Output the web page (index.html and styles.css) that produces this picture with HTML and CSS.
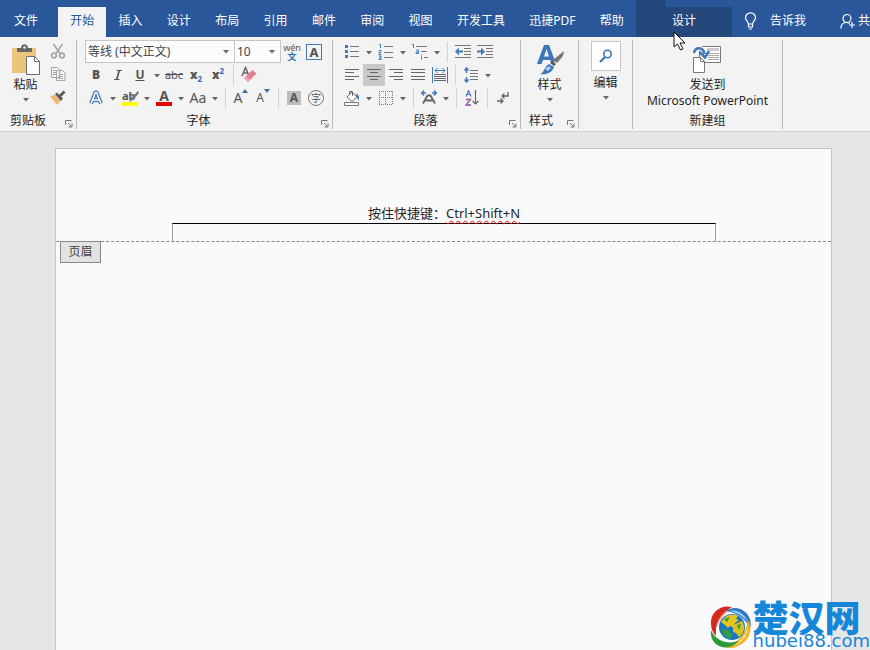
FILE: index.html
```html
<!DOCTYPE html>
<html lang="zh-CN">
<head>
<meta charset="utf-8">
<title>文档编辑器</title>
<link rel="stylesheet" href="styles.css">
</head>
<body>
<svg class="defs" aria-hidden="true">
  <symbol id="caret" viewBox="0 0 12 22"><path d="M3 10h6L6 13.500z" fill="#666"/></symbol>
  <symbol id="down" viewBox="0 0 8 5"><path d="M1 1h6L4 4.500z" fill="#666"/></symbol>
  <symbol id="launch" viewBox="0 0 9 9"><path d="M1.500 6V1.500h6M4 4l3.500 3.500M8 4.500V8H4.500" fill="none" stroke="#777"/></symbol>
</svg>

<header class="tabs">
  <button class="tab file">文件</button>
  <nav class="tablist">
    <button class="tab active">开始</button>
    <button class="tab">插入</button>
    <button class="tab">设计</button>
    <button class="tab">布局</button>
    <button class="tab">引用</button>
    <button class="tab">邮件</button>
    <button class="tab">审阅</button>
    <button class="tab">视图</button>
    <button class="tab">开发工具</button>
    <button class="tab">迅捷PDF</button>
    <button class="tab">帮助</button>
  </nav>
  <div class="context">
    <span class="context-title"></span>
    <button class="tab context-tab">设计</button>
  </div>
  <button class="tab tell">
    <svg width="13" height="18" viewBox="0 0 13 18" fill="none" stroke="#fff" stroke-width="1.200"><path d="M4.500 12C4.500 9.500 1.500 8.500 1.500 5.800a5 5 0 0 1 10 0C11.500 8.500 8.500 9.500 8.500 12zM4.500 12v3h4v-3M5 17h3"/></svg>
    告诉我
  </button>
  <button class="tab share">
    <svg width="16" height="17" viewBox="0 0 16 17" fill="none" stroke="#fff" stroke-width="1.200"><circle cx="7" cy="5.500" r="4"/><path d="M1 15.500c0-3.500 2-6 5.500-6 1.500 0 2.500.5 3.300 1M12 9v6M9 12h6"/></svg>
    共
  </button>
</header>

<section class="ribbon">
  <div class="group clipboard">
    <div class="body clip-body">
      <button class="big paste">
        <svg width="28" height="31" viewBox="0 0 28 31"><path d="M0 4h24v25H0z" fill="#edc47b"/><path d="M5 8V4h4c0-5 7-5 7 0h4v4z" fill="#666"/><circle cx="12.500" cy="3.500" r="1.300" fill="#eee"/><path d="M14.500 12.500h8l5 5v13h-13z" fill="#fff" stroke="#6c6c6c"/><path d="M22.500 12.500v5h5" fill="none" stroke="#6c6c6c"/></svg>
        <span>粘贴</span>
        <svg class="down"><use href="#down"/></svg>
      </button>
      <div class="stack">
        <button class="tool" aria-label="剪切"><svg width="16" height="16" viewBox="0 0 16 16" fill="none" stroke="#a6a6a6" stroke-width="1.700"><path d="M3.500 1l7 10M12.500 1l-7 10"/><circle cx="4" cy="12.500" r="2.300"/><circle cx="12" cy="12.500" r="2.300"/></svg></button>
        <button class="tool" aria-label="复制"><svg width="16" height="16" viewBox="0 0 16 16" fill="#f3f3f3" stroke="#a6a6a6"><path d="M1.500 1.500h6l2 2v8h-8zM6.500 4.500h6l2.500 2.500v7.500H6.500z"/><path d="M3 4.500h3M3 6.500h3M3 8.500h3M8.500 8.500H13M8.500 10.500H13M8.500 12.500H13"/></svg></button>
        <button class="tool" aria-label="格式刷"><svg width="16" height="16" viewBox="0 0 16 16"><path d="M0 7.500l5-2 6 6L7 16z" fill="#edb873"/><path d="M5 5l2-1.500 6 6L11 12z" fill="#5a5a5a"/><path d="M9 6l4.500-4.500 2 2L11 8z" fill="#5a5a5a"/></svg></button>
      </div>
    </div>
    <div class="foot"><span>剪贴板</span><button class="launch" aria-label="剪贴板选项"><svg><use href="#launch"/></svg></button></div>
  </div>

  <div class="group font">
    <div class="body rows">
      <div class="row">
        <label class="combo family"><select aria-label="字体"><option>等线 (中文正文)</option></select><svg class="down"><use href="#down"/></svg></label>
        <label class="combo size"><select aria-label="字号"><option>10</option></select><svg class="down"><use href="#down"/></svg></label>
        <button class="tool pinyin" aria-label="拼音指南"><span>wén</span><span class="han">文</span></button>
        <button class="tool"><span class="boxed">A</span></button>
      </div>
      <div class="row">
        <button class="tool glyph"><b>B</b></button>
        <button class="tool glyph" aria-label="倾斜"><svg width="8" height="10" viewBox="0 0 8 10" fill="none" stroke="#555"><path d="M2.500.5H8M0 9.500h5.500" /><path d="M5.200.5L2.800 9.500" stroke-width="1.700"/></svg></button>
        <button class="tool glyph"><u>U</u></button>
        <button class="caret" aria-label="下划线样式"><svg><use href="#caret"/></svg></button>
        <button class="tool strike"><s>abc</s></button>
        <button class="tool glyph"><b>x</b><span class="sub">2</span></button>
        <button class="tool glyph"><b>x</b><span class="sup">2</span></button>
        <span class="sep"></span>
        <button class="tool" aria-label="清除格式"><svg width="18" height="18" viewBox="0 0 18 18"><path d="M2 10L5.500 1.500 9 10M3.500 7H8" fill="none" stroke="#666" stroke-width="1.500"/><path d="M4 12l8.500-8 4 3.500-8.500 8.500z" fill="#e5808f"/><path d="M4 12l2-2 4 4-2 2z" fill="#f1a8b2"/></svg></button>
      </div>
      <div class="row">
        <button class="tool" aria-label="文本效果"><svg width="16" height="16" viewBox="0 0 16 16" fill="none" stroke-linejoin="round"><path d="M3 13.500L7.500 2.500h1L13 13.500M5 10h6" stroke="#b5cfee" stroke-width="5"/><path d="M3 13.500L7.500 2.500h1L13 13.500M5 10h6" stroke="#3e6fa8" stroke-width="3.400"/><path d="M3 13.500L7.500 2.500h1L13 13.500M5 10h6" stroke="#fff" stroke-width="1.500"/></svg></button>
        <button class="caret" aria-label="文本效果选项"><svg><use href="#caret"/></svg></button>
        <button class="tool colored hl"><span>ab</span><svg class="pen" width="11" height="12" viewBox="0 0 11 12"><path d="M10 0L3 7 1 11l4-2 6-7z" fill="#777"/></svg></button>
        <button class="caret" aria-label="突出显示颜色"><svg><use href="#caret"/></svg></button>
        <button class="tool colored fc"><span>A</span></button>
        <button class="caret" aria-label="字体颜色"><svg><use href="#caret"/></svg></button>
        <button class="tool latin">Aa</button>
        <button class="caret" aria-label="更改大小写"><svg><use href="#caret"/></svg></button>
        <span class="sep"></span>
        <button class="tool latin">A<svg class="mark" width="6" height="4" viewBox="0 0 6 4"><path d="M0 4h6L3 0z" fill="#44709f"/></svg></button>
        <button class="tool latin small">A<svg class="mark" width="6" height="4" viewBox="0 0 6 4"><path d="M0 0h6L3 4z" fill="#44709f"/></svg></button>
        <span class="sep"></span>
        <button class="tool"><span class="shaded">A</span></button>
        <button class="tool"><span class="circled">字</span></button>
      </div>
    </div>
    <div class="foot"><span>字体</span><button class="launch" aria-label="字体选项"><svg><use href="#launch"/></svg></button></div>
  </div>

  <div class="group para">
    <div class="body rows">
      <div class="row">
        <button class="tool" aria-label="项目符号"><svg width="14" height="15" viewBox="0 0 14 15"><path d="M0 1h3v3H0zM0 6h3v3H0zM0 11h3v3H0z" fill="#4478b8"/><path d="M5 2.500h9M5 7.500h9M5 12.500h9" stroke="#777"/></svg></button>
        <button class="caret" aria-label="项目符号选项"><svg><use href="#caret"/></svg></button>
        <button class="tool" aria-label="编号"><svg width="16" height="16" viewBox="0 0 16 16"><path d="M1 .5h1.500V4M.5 6.500H3v2H1v2h2.500M.5 12H3v1.800H1.500 3v1.700H.5" fill="none" stroke="#4478b8"/><path d="M6 2.500h9M6 8.500h9M6 13.500h9" stroke="#777"/></svg></button>
        <button class="caret" aria-label="编号选项"><svg><use href="#caret"/></svg></button>
        <button class="tool" aria-label="多级列表"><svg width="18" height="16" viewBox="0 0 18 16"><path d="M1 .5h1.500V4M5 6h2.500v3.500H5V8h2M10.500 10.500v1M10.500 12.500v3" fill="none" stroke="#4478b8"/><path d="M5 2.500h11M10 7.500h6M13 13.500h4" stroke="#777"/></svg></button>
        <button class="caret" aria-label="多级列表选项"><svg><use href="#caret"/></svg></button>
        <span class="sep"></span>
        <button class="tool" aria-label="减少缩进"><svg width="16" height="13" viewBox="0 0 16 13"><path d="M0 .5h16M9 3.500h7M9 6.500h7M9 9.500h7M0 12.500h16" stroke="#777"/><path d="M0 6.500L4 2.500v3h4v2H4v3z" fill="#4478b8"/></svg></button>
        <button class="tool" aria-label="增加缩进"><svg width="16" height="13" viewBox="0 0 16 13"><path d="M0 .5h16M9 3.500h7M9 6.500h7M9 9.500h7M0 12.500h16" stroke="#777"/><path d="M8 6.500L4 2.500v3H0v2h4v3z" fill="#4478b8"/></svg></button>
      </div>
      <div class="row">
        <button class="tool" aria-label="左对齐"><svg width="14" height="12" viewBox="0 0 14 12" stroke="#666"><path d="M0 .5h14M0 3.500h9M0 7.500h14M0 10.500h9"/></svg></button>
        <button class="tool on" aria-label="居中"><svg width="14" height="12" viewBox="0 0 14 12" stroke="#666"><path d="M0 .5h14M3 3.500h8M0 7.500h14M3 10.500h8"/></svg></button>
        <button class="tool" aria-label="右对齐"><svg width="14" height="12" viewBox="0 0 14 12" stroke="#666"><path d="M0 .5h14M5 3.500h9M0 7.500h14M5 10.500h9"/></svg></button>
        <button class="tool" aria-label="两端对齐"><svg width="14" height="12" viewBox="0 0 14 12" stroke="#666"><path d="M0 .5h14M0 3.500h14M0 7.500h14M0 10.500h14"/></svg></button>
        <button class="tool" aria-label="分散对齐"><svg width="16" height="16" viewBox="0 0 16 16" fill="none"><path d="M.5 0v16M15.500 0v16M3 3.500h10M5.500 1L3 3.500 5.500 6M10.500 1L13 3.500 10.500 6" stroke="#4478b8"/><path d="M2 7.500h12M2 9.500h12M2 11.500h12M2 13.500h12" stroke="#666"/></svg></button>
        <span class="sep"></span>
        <button class="tool" aria-label="行距"><svg width="14" height="16" viewBox="0 0 14 16" fill="none"><path d="M2.500 1v5M.5 3.500l2-2.500 2 2.500M2.500 10v5M.5 12.500l2 2.500 2-2.500" stroke="#4478b8" stroke-width="1.500"/><path d="M6 3.500h8M6 6.500h8M6 9.500h8M6 12.500h8" stroke="#777"/></svg></button>
        <button class="caret" aria-label="行距选项"><svg><use href="#caret"/></svg></button>
      </div>
      <div class="row">
        <button class="tool" aria-label="底纹"><svg width="16" height="16" viewBox="0 0 16 16" fill="none"><path d="M3 7l5-5 5 5-5 4.500z" fill="#fff" stroke="#666"/><path d="M5.500 5V1.500h3V6" stroke="#666"/><path d="M12 3.500c3 1 3.500 3.500 2.500 7-1-2-1.500-3-2-4z" fill="#4478b8"/><path d="M.5 12.500h14v3H.5z" fill="#fff" stroke="#777"/></svg></button>
        <button class="caret" aria-label="底纹颜色"><svg><use href="#caret"/></svg></button>
        <button class="tool" aria-label="边框"><svg width="14" height="14" viewBox="0 0 14 14" fill="none" stroke="#777" stroke-dasharray="1 1"><path d="M0 .5h14M0 6.500h14M0 13.500h14M.5 0v14M6.500 0v14M13.500 0v14"/></svg></button>
        <button class="caret" aria-label="边框选项"><svg><use href="#caret"/></svg></button>
        <span class="sep"></span>
        <button class="tool" aria-label="中文版式"><svg width="16" height="15" viewBox="0 0 16 15" fill="none"><path d="M0 3h5M3 .5L.7 3 3 5.500M16 3h-5M13 .5L15.300 3 13 5.500" stroke="#4478b8" stroke-width="1.400"/><path d="M2 13.500l4.500-8h3l4.500 8M4.500 10.500h7" stroke="#666" stroke-width="1.800"/></svg></button>
        <button class="caret" aria-label="中文版式选项"><svg><use href="#caret"/></svg></button>
        <span class="sep"></span>
        <button class="tool" aria-label="排序"><svg width="14" height="16" viewBox="0 0 14 16" fill="none"><path d="M1 6.500L3.500.5 6 6.500M2 4.500h3" stroke="#4478b8" stroke-width="1.200"/><path d="M1 9.500h4.500L1 15h5" stroke="#9454a5" stroke-width="1.300"/><path d="M10.500 0v14M7.500 11l3 3 3-3" stroke="#666" stroke-width="1.200"/></svg></button>
        <span class="sep"></span>
        <button class="tool" aria-label="显示编辑标记"><svg width="12" height="14" viewBox="0 0 12 14" fill="none" stroke="#666" stroke-width="1.300"><path d="M11 1v4H5M7.500 2.500L5 5l2.500 2.500M0 10h6M3.500 7.500L6 10l-2.500 2.500"/></svg></button>
      </div>
    </div>
    <div class="foot"><span>段落</span><button class="launch" aria-label="段落选项"><svg><use href="#launch"/></svg></button></div>
  </div>

  <div class="group styles">
    <div class="body">
      <button class="big">
        <svg width="30" height="31" viewBox="0 0 30 31"><path d="M2 20L9 1h5l6 16-3 3-2-4H8l-1.500 4zM9 12.500h5L11.500 5z" fill="#3e76b9"/><path d="M29 7l-1 5-6 7-4-3z" fill="#777"/><path d="M17 17l4 3-2 2-4-3z" fill="#555"/><path d="M14 20l5 3c-2 6-8 8-14 7 4-1 4-7 9-10z" fill="#3e76b9"/><path d="M10 25l4-3 2 2-3 3z" fill="#b5d2ef"/></svg>
        <span>样式</span>
        <svg class="down"><use href="#down"/></svg>
      </button>
    </div>
    <div class="foot"><span>样式</span><button class="launch" aria-label="样式选项"><svg><use href="#launch"/></svg></button></div>
  </div>

  <div class="group edit">
    <div class="body">
      <button class="big">
        <span class="tile"><svg width="14" height="14" viewBox="0 0 14 14" fill="none" stroke="#3e76b9"><circle cx="8.500" cy="5" r="3.700" stroke-width="1.600"/><path d="M6 8l-5 5" stroke-width="2.200"/></svg></span>
        <span>编辑</span>
        <svg class="down"><use href="#down"/></svg>
      </button>
    </div>
  </div>

  <div class="group send">
    <div class="body">
      <button class="big">
        <svg width="30" height="31" viewBox="0 0 30 31" fill="none"><path d="M7.500 2.500h21v16h-21z" fill="#fff" stroke="#777"/><path d="M15 4h12v3H15z" fill="#ccc"/><path d="M16 9.500h11M16 11.500h11M16 13.500h11M16 15.500h11" stroke="#aaa"/><path d="M1.500 13.500h7l4 4v11h-11z" fill="#fff" stroke="#777"/><path d="M8.500 13.500v4h4" stroke="#777"/><path d="M2 9C3 3 11 2 13 10" stroke="#f3f3f3" stroke-width="5"/><path d="M2 9C3 3 11 2 12.500 10" stroke="#3e76b9" stroke-width="2.500"/><path d="M7.500 8l5.500 5.500L17 7" stroke="#3e76b9" stroke-width="2.500"/></svg>
        <span>发送到</span>
        <span>Microsoft PowerPoint</span>
      </button>
    </div>
    <div class="foot"><span>新建组</span></div>
  </div>
</section>

<main class="workspace">
  <article class="page">
    <div class="page-header">
      <p class="header-text">按住快捷键：<span class="typo">Ctrl+Shift+N</span></p>
      <div class="header-box"></div>
    </div>
    <div class="header-edge"><span class="tag">页眉</span></div>
  </article>
</main>

<aside class="watermark">
  <svg width="42" height="44" viewBox="0 0 42 44">
    <circle cx="21" cy="22" r="17" fill="#fff"/>
    <path d="M22 2C10-1 0 8 1 19c0 5 2 9 5 12-1-12 3-21 16-29z" fill="#d42a22"/>
    <path d="M20 5C10 8 6 17 7 29c-1-9 3-17 13-24z" fill="#f79a80"/>
    <path d="M16 6c9-7 21-1 24 8 1 4 1 7 0 10C36 14 28 8 16 6z" fill="#2b79c9"/>
    <path d="M20 6c8-2 15 4 18 11-5-6-10-9-18-11z" fill="#a7d0f2"/>
    <path d="M38 15c7 13-2 25-16 28-3 0-5 0-7-1 12-4 21-12 23-27z" fill="#f3b11a"/>
    <path d="M38 22c0 9-6 16-15 19 7-4 12-10 15-19z" fill="#fde29a"/>
    <path d="M1 25c4 10 15 15 28 11-6 6-14 8-20 5C3 38 0 32 1 25z" fill="#2b9a3a"/>
    <circle cx="22" cy="22" r="13" fill="#1676c2"/>
    <path d="M11 17c4-7 11-9 17-6l-2 3 3 1-4 3-1 5-4-2-2 2-3-3z" fill="#e3c61e"/>
    <path d="M23 20l9-4c4 6 2 12-3 16l-3-4-3-1z" fill="#d9c320"/>
    <path d="M11 24l7 1 4 4-1 5c-5-1-9-5-10-10zM14 14l6-2-3 5zM27 20l4-1-2 6z" fill="#339b40"/>
  </svg>
  <div class="brand"><span class="brand-name">楚汉网</span><span class="brand-url">hubei88.com</span></div>
</aside>
<svg class="pointer" width="13" height="20" viewBox="0 0 13 20"><path d="M1 1v15l3.500-3 3 6 2.500-1.200-3-5.800H12z" fill="#fff" stroke="#111"/></svg>
</body>
</html>
```
FILE: styles.css
```css
* { box-sizing: border-box; }
body {
  margin: 0;
  height: 100vh;
  display: flex;
  flex-direction: column;
  overflow: hidden;
  background: #e6e6e6;
  color: #262626;
  font: 12px/16px "Noto Sans", "Noto Sans CJK SC", sans-serif;
}
button {
  border: 0;
  padding: 0;
  background: none;
  color: inherit;
  font: inherit;
  white-space: nowrap;
}
svg { display: block; flex: none; }
.defs { position: absolute; width: 0; height: 0; }

/* Tab strip */
.tabs {
  flex: none;
  display: flex;
  height: 37px;
  background: #2a579a;
  color: #fff;
  overflow: hidden;
}
.tab {
  flex: none;
  margin-top: 7px;
  padding: 0 12px 2px;
}
.file { padding: 0 20px 2px 14px; }
.tablist { display: flex; flex: 0 0 578px; }
.tablist .tab { flex: 1 0 auto; }
.active { background: #f3f3f3; color: #2a579a; }
.context { flex: none; display: flex; flex-direction: column; width: 96px; }
.context-title { width: 30px; height: 7px; background: #24477c; }
.context-tab { flex: 1; margin: 0; background: #24477c; }
.tell, .share { display: flex; align-items: center; gap: 13px; }
.share { margin-left: auto; gap: 2px; padding: 0 0 2px; }

/* Ribbon */
.ribbon {
  flex: none;
  display: flex;
  height: 95px;
  padding: 3px 0 2px;
  background: #f3f3f3;
  border-bottom: 1px solid #d0d0d0;
}
.group {
  display: flex;
  flex-direction: column;
  border-right: 1px solid #b8b8b8;
}
.clipboard { width: 77px; }
.font { width: 256px; }
.para { width: 188px; }
.styles { width: 58px; }
.edit { width: 54px; }
.send { width: 150px; }
.body { flex: 1; display: flex; justify-content: center; }
.rows { flex-direction: column; justify-content: flex-start; padding: 0 0 0 8px; }
.row { display: flex; align-items: center; height: 23px; }
.foot { display: flex; align-items: center; height: 16px; padding: 0 3px 0 10px; }
.foot span { flex: 1; text-align: center; }
.font .foot { padding-left: 0; }
.clipboard .foot span, .styles .foot span { text-align: left; }
.styles .foot { padding-left: 8px; }
.send .foot { padding: 0 4px; }
.launch { width: 9px; height: 9px; margin-top: 5px; }
.launch svg { width: 9px; height: 9px; }
.clip-body { justify-content: flex-start; padding-left: 4px; }
.stack { display: flex; flex-direction: column; gap: 1px; }
.big {
  display: flex;
  flex-direction: column;
  align-items: center;
  justify-content: flex-start;
  padding-top: 4px;
}
.big > svg:first-child { margin-bottom: 2px; }
.paste { width: 43px; }
.down { width: 8px; height: 5px; margin-top: 4px; }
.edit .big { padding-top: 1px; }
.tile {
  display: grid;
  place-items: center;
  width: 30px;
  height: 30px;
  margin-bottom: 4px;
  border: 1px solid #c6c6c6;
  background: #fdfdfd;
}
.tool {
  position: relative;
  display: flex;
  align-items: center;
  justify-content: center;
  width: 22px;
  height: 22px;
  color: #555;
}
.on { background: #c8c8c8; }
.caret, .caret svg { width: 12px; height: 22px; }
.sep { width: 1px; height: 20px; margin: 0 4px; background: #d2d2d2; }

.combo {
  display: flex;
  align-items: center;
  height: 23px;
  padding: 0 4px 0 2px;
  border: 1px solid #c6c6c6;
  background: #fcfcfc;
}
.combo select {
  flex: 1;
  min-width: 0;
  appearance: none;
  border: 0;
  padding: 0;
  background: none;
  color: #444;
  font: inherit;
}
.combo .down { margin: 0; }
.family { width: 150px; }
.size { width: 47px; margin-left: -1px; }
.pinyin {
  flex-direction: column;
  font-size: 9px;
  line-height: 9px;
}
.han { color: #2f6cb0; font-weight: bold; }
.boxed {
  width: 16px;
  height: 16px;
  border: 1px solid #4478b8;
  font: bold 13px/14px "Noto Sans", sans-serif;
}
.glyph { font-weight: bold; }
.strike { font-size: 11px; }
.sub, .sup { font-size: 8px; line-height: 8px; color: #2f6cb0; }
.sub { align-self: flex-end; margin-bottom: 3px; }
.sup { align-self: flex-start; margin-top: 3px; }
.colored { flex-direction: column; line-height: 12px; }
.colored::after { content: ""; width: 16px; height: 4px; }
.hl { font-size: 11px; font-weight: bold; align-items: flex-start; padding-left: 3px; }
.hl::after { background: #ff0; }
.pen { position: absolute; right: 2px; top: 4px; }
.fc { font-size: 14px; font-weight: bold; }
.fc::after { background: #e80000; }
.latin { font-size: 14px; }
.small { font-size: 12px; }
.mark { align-self: flex-start; margin-top: 2px; }
.shaded {
  width: 14px;
  height: 14px;
  background: #bdbdbd;
  font: bold 12px/14px "Noto Sans", sans-serif;
}
.circled {
  width: 16px;
  height: 16px;
  border: 1px solid #777;
  border-radius: 50%;
  font-size: 10px;
  line-height: 14px;
}

/* Document */
.workspace { flex: 1; display: flex; padding: 16px 38px 0 55px; }
.page { flex: 1; background: #fafafd; border: 1px solid #c4c4c4; border-bottom: 0; }
.page-header { padding: 55px 115px 0 116px; }
.header-text {
  margin: 0;
  height: 19px;
  text-align: center;
  font-size: 13px;
  line-height: 19px;
}
.typo {
  text-decoration: underline wavy #f00000 1px;
  text-decoration-skip-ink: none;
  text-underline-offset: 2px;
}
.header-box {
  height: 18px;
  border: 1px solid #999;
  border-top-color: #000;
  border-bottom: 0;
}
.header-edge { border-top: 1px dashed #888; padding-left: 4px; }
.tag {
  display: block;
  width: 41px;
  margin-top: -1px;
  border: 1px solid #888;
  background: #e2e2e2;
  color: #444;
  line-height: 20px;
  text-align: center;
}

/* Overlays */
.watermark {
  position: absolute;
  right: 0;
  bottom: 1px;
  display: flex;
  align-items: flex-end;
}
.brand { display: flex; flex-direction: column; padding-left: 1px; color: #1686d9; }
.brand-name {
  height: 31px;
  font: 900 36px/29px "Noto Sans CJK SC", sans-serif;
}
.brand-url { font: 18px/16px "DejaVu Sans", sans-serif; }
.pointer { position: absolute; left: 673px; top: 31px; }
```
